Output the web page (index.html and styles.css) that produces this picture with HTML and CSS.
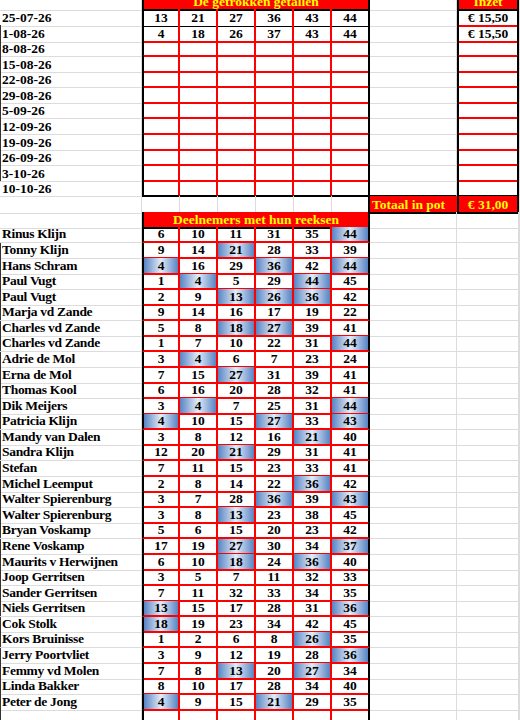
FILE: index.html
```html
<!DOCTYPE html>
<html lang="nl">

<head>
    <meta charset="UTF-8">
    <meta name="viewport" content="width=device-width, initial-scale=1.0">
    <title>Lotto pot</title>
    <link rel="stylesheet" href="styles.css">
</head>

<body>
    <div class="sheet">
        <!-- trekkingen -->
        <div class="row top">
            <div class="lbl"></div>
            <div class="head">De getrokken getallen</div>
            <div></div>
            <div class="inzet-head">Inzet</div>
            <div></div>
        </div>
        <div class="row draw first">
            <div class="lbl">25-07-26</div>
            <div class="n">13</div><div class="n">21</div><div class="n">27</div><div class="n">36</div><div class="n">43</div><div class="n">44</div>
            <div></div><div class="inzet">€ 15,50</div><div></div>
        </div>
        <div class="row draw">
            <div class="lbl edge">1-08-26</div>
            <div class="n">4</div><div class="n">18</div><div class="n">26</div><div class="n">37</div><div class="n">43</div><div class="n">44</div>
            <div></div><div class="inzet">€ 15,50</div><div></div>
        </div>
        <div class="row draw">
            <div class="lbl edge">8-08-26</div>
            <div class="n"></div><div class="n"></div><div class="n"></div><div class="n"></div><div class="n"></div><div class="n"></div>
            <div></div><div class="inzet"></div><div></div>
        </div>
        <div class="row draw">
            <div class="lbl edge">15-08-26</div>
            <div class="n"></div><div class="n"></div><div class="n"></div><div class="n"></div><div class="n"></div><div class="n"></div>
            <div></div><div class="inzet"></div><div></div>
        </div>
        <div class="row draw">
            <div class="lbl edge">22-08-26</div>
            <div class="n"></div><div class="n"></div><div class="n"></div><div class="n"></div><div class="n"></div><div class="n"></div>
            <div></div><div class="inzet"></div><div></div>
        </div>
        <div class="row draw">
            <div class="lbl edge">29-08-26</div>
            <div class="n"></div><div class="n"></div><div class="n"></div><div class="n"></div><div class="n"></div><div class="n"></div>
            <div></div><div class="inzet"></div><div></div>
        </div>
        <div class="row draw">
            <div class="lbl edge">5-09-26</div>
            <div class="n"></div><div class="n"></div><div class="n"></div><div class="n"></div><div class="n"></div><div class="n"></div>
            <div></div><div class="inzet"></div><div></div>
        </div>
        <div class="row draw">
            <div class="lbl edge">12-09-26</div>
            <div class="n"></div><div class="n"></div><div class="n"></div><div class="n"></div><div class="n"></div><div class="n"></div>
            <div></div><div class="inzet"></div><div></div>
        </div>
        <div class="row draw">
            <div class="lbl edge">19-09-26</div>
            <div class="n"></div><div class="n"></div><div class="n"></div><div class="n"></div><div class="n"></div><div class="n"></div>
            <div></div><div class="inzet"></div><div></div>
        </div>
        <div class="row draw">
            <div class="lbl edge">26-09-26</div>
            <div class="n"></div><div class="n"></div><div class="n"></div><div class="n"></div><div class="n"></div><div class="n"></div>
            <div></div><div class="inzet"></div><div></div>
        </div>
        <div class="row draw">
            <div class="lbl edge">3-10-26</div>
            <div class="n"></div><div class="n"></div><div class="n"></div><div class="n"></div><div class="n"></div><div class="n"></div>
            <div></div><div class="inzet"></div><div></div>
        </div>
        <div class="row draw last">
            <div class="lbl">10-10-26</div>
            <div class="n"></div><div class="n"></div><div class="n"></div><div class="n"></div><div class="n"></div><div class="n"></div>
            <div class="gap"></div><div class="inzet"></div><div></div>
        </div>
        <div class="row total">
            <div class="lbl"></div>
            <div class="b"></div><div class="b"></div><div class="b"></div><div class="b"></div><div class="b"></div><div class="b"></div>
            <div class="tot-lbl">Totaal in pot</div><div class="tot">€ 31,00</div><div></div>
        </div>

        <!-- deelnemers -->
        <div class="row sub">
            <div class="lbl"></div>
            <div class="head">Deelnemers met hun reeksen</div>
            <div></div><div></div><div></div>
        </div>
        <div class="row p">
            <div class="lbl">Rinus Klijn</div>
            <div class="n">6</div><div class="n">10</div><div class="n">11</div><div class="n">31</div><div class="n">35</div><div class="n hit">44</div>
            <div></div><div></div><div></div>
        </div>
        <div class="row p">
            <div class="lbl edge">Tonny Klijn</div>
            <div class="n">9</div><div class="n">14</div><div class="n hit">21</div><div class="n">28</div><div class="n">33</div><div class="n">39</div>
            <div></div><div></div><div></div>
        </div>
        <div class="row p">
            <div class="lbl edge">Hans Schram</div>
            <div class="n hit">4</div><div class="n">16</div><div class="n">29</div><div class="n hit">36</div><div class="n">42</div><div class="n hit">44</div>
            <div></div><div></div><div></div>
        </div>
        <div class="row p">
            <div class="lbl edge">Paul Vugt</div>
            <div class="n">1</div><div class="n hit">4</div><div class="n">5</div><div class="n">29</div><div class="n hit">44</div><div class="n">45</div>
            <div></div><div></div><div></div>
        </div>
        <div class="row p">
            <div class="lbl edge">Paul Vugt</div>
            <div class="n">2</div><div class="n">9</div><div class="n hit">13</div><div class="n hit">26</div><div class="n hit">36</div><div class="n">42</div>
            <div></div><div></div><div></div>
        </div>
        <div class="row p">
            <div class="lbl edge">Marja vd Zande</div>
            <div class="n">9</div><div class="n">14</div><div class="n">16</div><div class="n">17</div><div class="n">19</div><div class="n">22</div>
            <div></div><div></div><div></div>
        </div>
        <div class="row p">
            <div class="lbl edge">Charles vd Zande</div>
            <div class="n">5</div><div class="n">8</div><div class="n hit">18</div><div class="n hit">27</div><div class="n">39</div><div class="n">41</div>
            <div></div><div></div><div></div>
        </div>
        <div class="row p">
            <div class="lbl edge">Charles vd Zande</div>
            <div class="n">1</div><div class="n">7</div><div class="n">10</div><div class="n">22</div><div class="n">31</div><div class="n hit">44</div>
            <div></div><div></div><div></div>
        </div>
        <div class="row p">
            <div class="lbl edge">Adrie de Mol</div>
            <div class="n">3</div><div class="n hit">4</div><div class="n">6</div><div class="n">7</div><div class="n">23</div><div class="n">24</div>
            <div></div><div></div><div></div>
        </div>
        <div class="row p">
            <div class="lbl edge">Erna de Mol</div>
            <div class="n">7</div><div class="n">15</div><div class="n hit">27</div><div class="n">31</div><div class="n">39</div><div class="n">41</div>
            <div></div><div></div><div></div>
        </div>
        <div class="row p">
            <div class="lbl edge">Thomas Kool</div>
            <div class="n">6</div><div class="n">16</div><div class="n">20</div><div class="n">28</div><div class="n">32</div><div class="n">41</div>
            <div></div><div></div><div></div>
        </div>
        <div class="row p">
            <div class="lbl edge">Dik Meijers</div>
            <div class="n">3</div><div class="n hit">4</div><div class="n">7</div><div class="n">25</div><div class="n">31</div><div class="n hit">44</div>
            <div></div><div></div><div></div>
        </div>
        <div class="row p">
            <div class="lbl edge">Patricia Klijn</div>
            <div class="n hit">4</div><div class="n">10</div><div class="n">15</div><div class="n hit">27</div><div class="n">33</div><div class="n hit">43</div>
            <div></div><div></div><div></div>
        </div>
        <div class="row p">
            <div class="lbl edge">Mandy van Dalen</div>
            <div class="n">3</div><div class="n">8</div><div class="n">12</div><div class="n">16</div><div class="n hit">21</div><div class="n">40</div>
            <div></div><div></div><div></div>
        </div>
        <div class="row p">
            <div class="lbl edge">Sandra Klijn</div>
            <div class="n">12</div><div class="n">20</div><div class="n hit">21</div><div class="n">29</div><div class="n">31</div><div class="n">41</div>
            <div></div><div></div><div></div>
        </div>
        <div class="row p">
            <div class="lbl edge">Stefan</div>
            <div class="n">7</div><div class="n">11</div><div class="n">15</div><div class="n">23</div><div class="n">33</div><div class="n">41</div>
            <div></div><div></div><div></div>
        </div>
        <div class="row p">
            <div class="lbl edge">Michel Leemput</div>
            <div class="n">2</div><div class="n">8</div><div class="n">14</div><div class="n">22</div><div class="n hit">36</div><div class="n">42</div>
            <div></div><div></div><div></div>
        </div>
        <div class="row p">
            <div class="lbl edge">Walter Spierenburg</div>
            <div class="n">3</div><div class="n">7</div><div class="n">28</div><div class="n hit">36</div><div class="n">39</div><div class="n hit">43</div>
            <div></div><div></div><div></div>
        </div>
        <div class="row p">
            <div class="lbl edge">Walter Spierenburg</div>
            <div class="n">3</div><div class="n">8</div><div class="n hit">13</div><div class="n">23</div><div class="n">38</div><div class="n">45</div>
            <div></div><div></div><div></div>
        </div>
        <div class="row p">
            <div class="lbl edge">Bryan Voskamp</div>
            <div class="n">5</div><div class="n">6</div><div class="n">15</div><div class="n">20</div><div class="n">23</div><div class="n">42</div>
            <div></div><div></div><div></div>
        </div>
        <div class="row p">
            <div class="lbl edge">Rene Voskamp</div>
            <div class="n">17</div><div class="n">19</div><div class="n hit">27</div><div class="n">30</div><div class="n">34</div><div class="n hit">37</div>
            <div></div><div></div><div></div>
        </div>
        <div class="row p">
            <div class="lbl edge">Maurits v Herwijnen</div>
            <div class="n">6</div><div class="n">10</div><div class="n hit">18</div><div class="n">24</div><div class="n hit">36</div><div class="n">40</div>
            <div></div><div></div><div></div>
        </div>
        <div class="row p">
            <div class="lbl edge">Joop Gerritsen</div>
            <div class="n">3</div><div class="n">5</div><div class="n">7</div><div class="n">11</div><div class="n">32</div><div class="n">33</div>
            <div></div><div></div><div></div>
        </div>
        <div class="row p">
            <div class="lbl edge">Sander Gerritsen</div>
            <div class="n">7</div><div class="n">11</div><div class="n">32</div><div class="n">33</div><div class="n">34</div><div class="n">35</div>
            <div></div><div></div><div></div>
        </div>
        <div class="row p">
            <div class="lbl edge">Niels Gerritsen</div>
            <div class="n hit">13</div><div class="n">15</div><div class="n">17</div><div class="n">28</div><div class="n">31</div><div class="n hit">36</div>
            <div></div><div></div><div></div>
        </div>
        <div class="row p">
            <div class="lbl edge">Cok Stolk</div>
            <div class="n hit">18</div><div class="n">19</div><div class="n">23</div><div class="n">34</div><div class="n">42</div><div class="n">45</div>
            <div></div><div></div><div></div>
        </div>
        <div class="row p">
            <div class="lbl edge">Kors Bruinisse</div>
            <div class="n">1</div><div class="n">2</div><div class="n">6</div><div class="n">8</div><div class="n hit">26</div><div class="n">35</div>
            <div></div><div></div><div></div>
        </div>
        <div class="row p">
            <div class="lbl edge">Jerry Poortvliet</div>
            <div class="n">3</div><div class="n">9</div><div class="n">12</div><div class="n">19</div><div class="n">28</div><div class="n hit">36</div>
            <div></div><div></div><div></div>
        </div>
        <div class="row p">
            <div class="lbl edge">Femmy vd Molen</div>
            <div class="n">7</div><div class="n">8</div><div class="n hit">13</div><div class="n">20</div><div class="n hit">27</div><div class="n">34</div>
            <div></div><div></div><div></div>
        </div>
        <div class="row p">
            <div class="lbl edge">Linda Bakker</div>
            <div class="n">8</div><div class="n">10</div><div class="n">17</div><div class="n">28</div><div class="n">34</div><div class="n">40</div>
            <div></div><div></div><div></div>
        </div>
        <div class="row p">
            <div class="lbl edge">Peter de Jong</div>
            <div class="n hit">4</div><div class="n">9</div><div class="n">15</div><div class="n hit">21</div><div class="n">29</div><div class="n">35</div>
            <div></div><div></div><div></div>
        </div>
        <div class="row p">
            <div class="lbl edge"></div>
            <div class="n"></div><div class="n"></div><div class="n"></div><div class="n"></div><div class="n"></div><div class="n"></div>
            <div></div><div></div><div></div>
        </div>
    </div>
</body>

</html>
```
FILE: styles.css
```css
html, body {
    margin: 0;
    height: 100%;
    overflow: hidden;
    background: #fff;
}
.sheet {
    margin-top: -6.6px;
    font-family: "Liberation Serif", "Times New Roman", serif;
    font-weight: bold;
    font-size: 13.5px;
    color: #000;
}
.row {
    display: grid;
    grid-template-columns: 142px repeat(6, 38px) 87px 62px 1fr;
    height: 15.58px;
}
.row > div {
    box-sizing: border-box;
    border-right: 1px solid #dcdcdc;
    border-bottom: 1px solid #dcdcdc;
    padding-top: 0.3px;
    line-height: 14px;
    text-align: center;
    white-space: nowrap;
}
.row .lbl {
    text-align: left;
    padding-left: 2px;
}
.row .edge {
    box-shadow: inset 1px 0 #333;
}
.p .lbl {
    letter-spacing: -0.3px;
}

/* rode rasters */
.row .n {
    border-right: 2px solid #f00;
    border-bottom: 2px solid #f00;
}
.row .n:nth-child(2) {
    border-left: 2px solid #000;
}
.row .n:nth-child(7) {
    border-right-color: #000;
}
.first .n {
    border-bottom: 1px solid #000;
}
.last .n {
    border-bottom-color: #000;
}
.draw > div {
    padding-top: 2px;
}
.row .hit {
    background: linear-gradient(90deg, #5884c4 0%, #e4ecf7 50%, #5884c4 100%);
}

/* koppen */
.row .head,
.row .inzet-head {
    grid-column: span 6;
    background: #f00;
    color: #ff0;
    border-left: 2px solid #000;
    border-right: 2px solid #000;
    border-bottom: 2px solid #000;
}
.row .inzet-head {
    grid-column: auto;
}
.top > div {
    padding-top: 1.5px;
}
.sub > div {
    padding-top: 1.2px;
}

/* inzet kolom */
.row .inzet {
    border-left: 2px solid #000;
    border-right: 2px solid #000;
    border-bottom: 2px solid #f00;
}
.last .inzet,
.last .gap {
    border-bottom: 2px solid #000;
}

/* totaal */
.total > div {
    padding-top: 2px;
}
.row .b {
    border-bottom: 2px solid #000;
}
.row .b:nth-child(7) {
    border-right: 2px solid #000;
}
.row .tot-lbl,
.row .tot {
    background: #f00;
    color: #ff0;
    border-bottom: 2px solid #000;
}
.row .tot-lbl {
    border-right: none;
    text-align: left;
    padding-left: 2px;
}
.row .tot {
    border-left: 2px solid #000;
    border-right: 2px solid #000;
}
```
